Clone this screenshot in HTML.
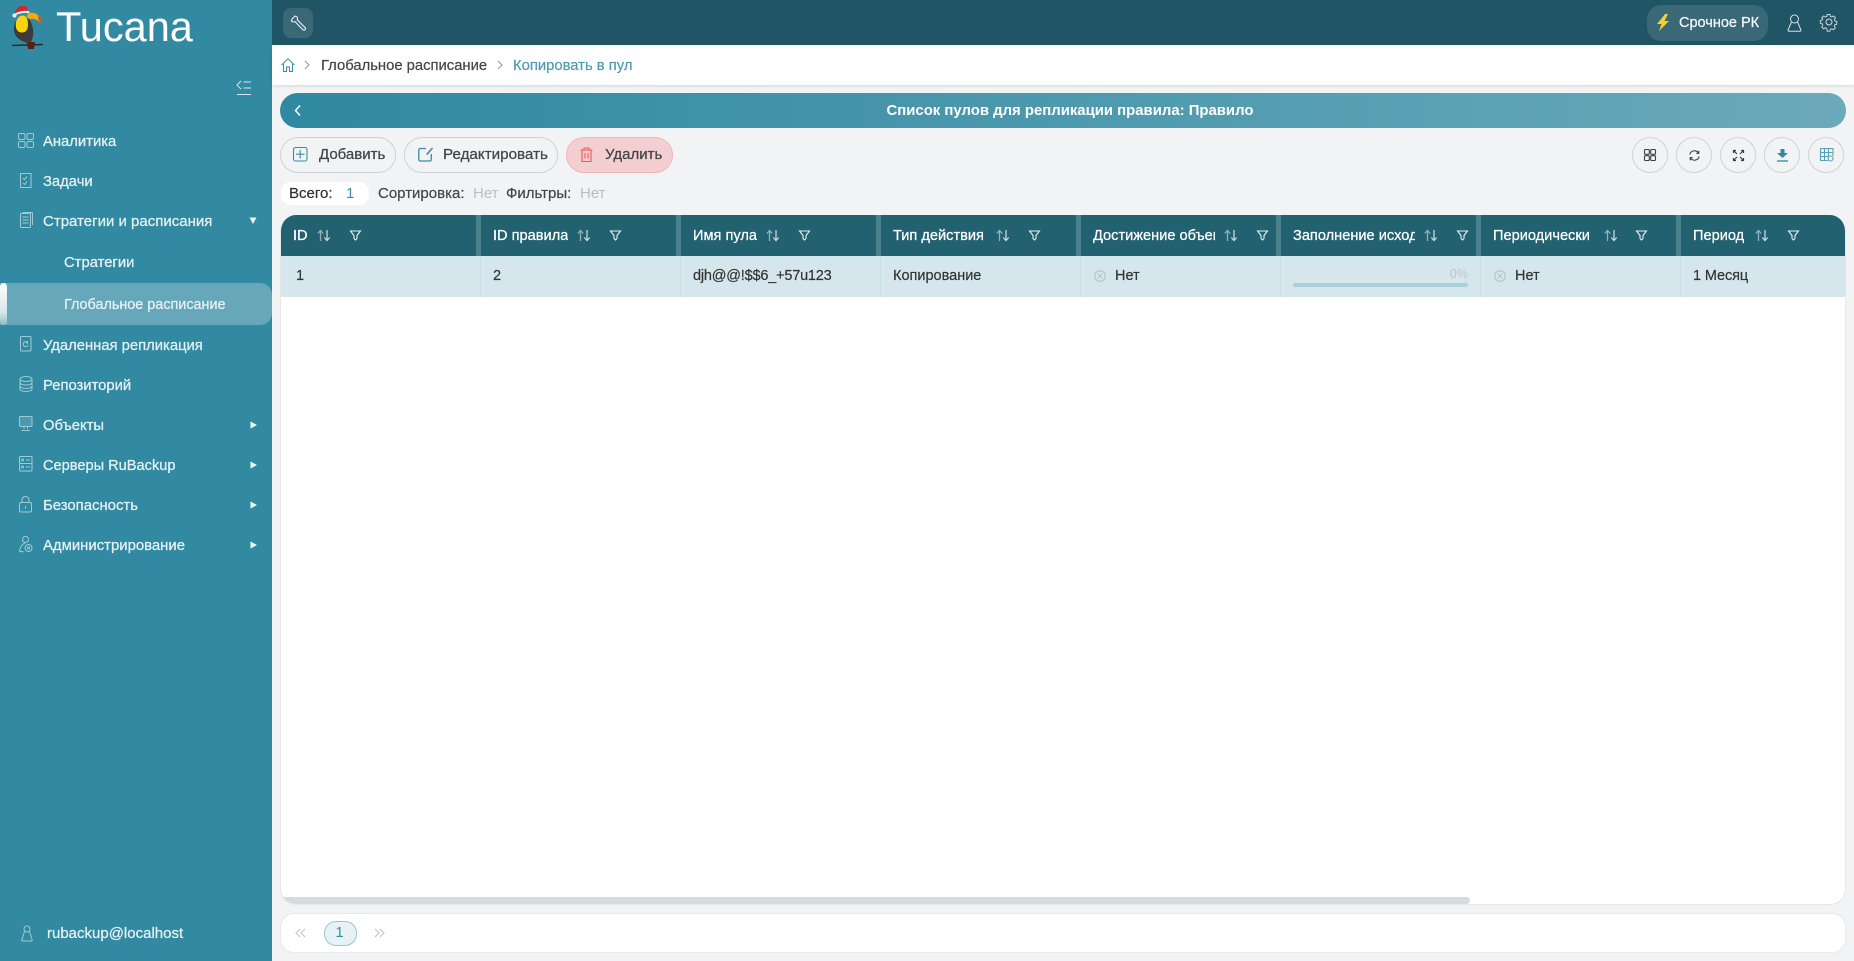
<!DOCTYPE html>
<html lang="ru"><head><meta charset="utf-8"><title>Tucana</title>
<style>
html,body{margin:0;padding:0;width:1854px;height:961px;overflow:hidden;background:#f2f3f5;font-family:"Liberation Sans",sans-serif}
.a{position:absolute}
.t{position:absolute;white-space:nowrap;line-height:20px;height:20px;font-size:15px;margin-top:1px}
svg{position:absolute;overflow:visible;fill:none}
.m{color:#e6f1f4;font-size:14.8px;left:43px;-webkit-text-stroke:.25px #e6f1f4}
.h{color:#fff;font-size:14.6px;top:225px;overflow:hidden;-webkit-text-stroke:.25px #fff}
.c{color:#333;font-size:14.5px;top:265px;-webkit-text-stroke:.2px #333}
.b{color:#444;top:144px;-webkit-text-stroke:.25px #444}
.rb{position:absolute;top:137px;width:34px;height:34px;border:1px solid #d0d2d4;border-radius:50%}
.sep{position:absolute;top:215px;height:41px;width:5px;background:#4b808d}
.div{position:absolute;top:256px;height:41px;width:1px;background:#c9dfe5}
.si{stroke:#e6f1f4;stroke-width:1;opacity:.62;margin-top:-1px}
</style></head><body>
<!-- sidebar -->
<div class="a" style="left:0;top:0;width:272px;height:961px;background:#318aa2"></div>
<!-- toucan -->
<svg style="left:0;top:0" width="50" height="52" viewBox="0 0 50 52">
<path d="M12 45.500l31-1" stroke="#2a2a2a" stroke-width="1.500"/>
<path d="M14 26c-1 7 2 12 8 15l5 2 4-1c3-6 3-13 0-20-3-6-15-8-17 4z" fill="#3b3b3d"/>
<path d="M27 42l1 7h6l1-7z" fill="#5c1f12"/>
<path d="M16 22c-1 6 1 10 5 10.500 5 .5 7-3 7-8 0-6-2-9-5-9-4 0-6 3-7 6.500z" fill="#fbd40e"/>
<path d="M25 15c4-3 9-3 13 0 3 2 4 5 3.500 9-3-4-7-6-12-5z" fill="#f6a915"/>
<path d="M38 15c3 2 4 5 3.500 9l-3-4z" fill="#d8541e"/>
<path d="M15 12c2-5 6-7 10-6 2 .5 3 3 4 6-5 0-10 1-14 3z" fill="#d9232e"/>
<path d="M14 14c5-3 10-3.500 15-3l.5 2c-5-.5-10 0-15 2.500z" fill="#f2f2f2"/>
<circle cx="14.500" cy="15.500" r="2" fill="#f2f2f2"/>
<circle cx="26" cy="15" r="1.500" fill="#2a9c7a"/>
</svg>
<div class="t" style="left:56px;top:2px;height:48px;line-height:48px;font-size:41.500px;color:#fff">Tucana</div>
<svg style="left:236px;top:80px" width="16" height="16" stroke="#d5e8ed" stroke-width="1"><path d="M5 1L1 5l4 4M7.500 2H15M7.500 8H15M1 14.500h14"/></svg>

<svg class="si" style="left:18px;top:134px" width="16" height="15"><rect x=".5" y=".5" width="6.500" height="6" rx="1.500"/><rect x="9" y=".5" width="6.500" height="6" rx="1.500"/><rect x=".5" y="8.500" width="6.500" height="6" rx="1.500"/><rect x="9" y="8.500" width="6.500" height="6" rx="1.500"/></svg>
<div class="t m" style="top:131px">Аналитика</div>
<svg class="si" style="left:20px;top:174px" width="12" height="15"><rect x=".5" y=".5" width="10.500" height="14"/><path d="M3 5l1.500 1.500L7 3.500M3 10l1.500 1.500L7 8.500"/></svg>
<div class="t m" style="top:171px">Задачи</div>
<svg class="si" style="left:20px;top:213px" width="13" height="16"><rect x=".5" y="1.500" width="10" height="14" rx="1"/><path d="M3 1V.5h8.500a1 1 0 0 1 1 1V13M2.500 5h6M2.500 8h6M2.500 11h6"/></svg>
<div class="t m" style="top:211px;font-size:15px">Стратегии и расписания</div>
<svg style="left:249px;top:217px" width="9" height="8"><path d="M.5.500h7L4 7z" fill="#eef6f8"/></svg>
<div class="t m" style="top:252px;left:64px">Стратегии</div>
<div class="a" style="left:0;top:283px;width:272px;height:42px;background:#66a7b9;border-radius:0 12px 12px 0"></div>
<div class="a" style="left:0;top:283px;width:7px;height:42px;background:linear-gradient(#fff,#d7e8ec 70%,#8dbdcb);border-radius:4px"></div>
<div class="t m" style="top:294px;left:64px;font-size:14.400px">Глобальное расписание</div>
<svg class="si" style="left:20px;top:337px" width="12" height="16"><rect x=".5" y=".5" width="10.500" height="14.500" rx="1"/><path d="M7.500 6.500A2.500 2.500 0 1 0 8 9M7.500 5v2H6"/></svg>
<div class="t m" style="top:335px">Удаленная репликация</div>
<svg class="si" style="left:19px;top:377px" width="14" height="16"><ellipse cx="7" cy="3" rx="6" ry="2.500"/><path d="M1 3v10c0 1.500 2.500 2.500 6 2.500s6-1 6-2.500V3M1 6.500c0 1.500 2.500 2.500 6 2.500s6-1 6-2.500M1 10c0 1.500 2.500 2.500 6 2.500s6-1 6-2.500"/></svg>
<div class="t m" style="top:375px">Репозиторий</div>
<svg class="si" style="left:19px;top:417px" width="14" height="16"><rect x=".5" y=".5" width="12.500" height="10" rx="1" fill="#e6f1f4" fill-opacity=".25"/><path d="M5 11v2M8.500 11v2M2.500 14.500h8.500"/></svg>
<div class="t m" style="top:415px">Объекты</div>
<svg style="left:250px;top:421px" width="8" height="9"><path d="M.5.500v7L7 4z" fill="#eef6f8"/></svg>
<svg class="si" style="left:19px;top:457px" width="14" height="16"><rect x=".5" y=".5" width="12.500" height="14.500" rx="1"/><path d="M.5 7.500h12.500M7 4h4M7 11h4"/><circle cx="3.500" cy="4" r="1"/><circle cx="3.500" cy="11" r="1"/></svg>
<div class="t m" style="top:455px;font-size:14.600px">Серверы RuBackup</div>
<svg style="left:250px;top:461px" width="8" height="9"><path d="M.5.500v7L7 4z" fill="#eef6f8"/></svg>
<svg class="si" style="left:19px;top:497px" width="13" height="17"><rect x=".5" y="6.500" width="12" height="9.500" rx="1.500"/><path d="M3 6.500V4a3.500 3.500 0 0 1 7 0v2.500M6.500 10v3"/></svg>
<div class="t m" style="top:495px;font-size:14.900px">Безопасность</div>
<svg style="left:250px;top:501px" width="8" height="9"><path d="M.5.500v7L7 4z" fill="#eef6f8"/></svg>
<svg class="si" style="left:19px;top:537px" width="14" height="17"><circle cx="6.500" cy="3.500" r="3"/><path d="M6 7C3 8 1 12 .5 15c2 1 3 1 4 .500"/><circle cx="9.500" cy="12" r="3.500"/><circle cx="9.500" cy="12" r="1"/></svg>
<div class="t m" style="top:535px;font-size:14.900px">Администрирование</div>
<svg style="left:250px;top:541px" width="8" height="9"><path d="M.5.500v7L7 4z" fill="#eef6f8"/></svg>
<svg class="si" style="left:21px;top:926px" width="12" height="17"><circle cx="6" cy="4" r="3"/><path d="M3.500 6.500L.8 15c0 .6.300 1 1 1h8.400c.7 0 1-.4 1-1L8.500 6.500"/></svg>
<div class="t m" style="top:923px;left:47px;font-size:15px">rubackup@localhost</div>

<!-- top bar -->
<div class="a" style="left:272px;top:0;width:1582px;height:45px;background:#1f5564"></div>
<div class="a" style="left:283px;top:8px;width:30px;height:30px;border-radius:8px;background:#3b6876"></div>
<svg style="left:291px;top:15px" width="16" height="16" viewBox="0 0 14 14" stroke="#e3edf0" stroke-width="1"><path d="M1 3.500L3.500 1l1 .2c1 .3 1.500 1.500 1 3l7 7c.5 1 0 1.800-.8 2-.5.1-1 0-1.400-.4l-6.800-7c-1.500.5-2.800 0-3.200-1z"/></svg>
<div class="a" style="left:1647px;top:5px;width:121px;height:36px;border-radius:14px;background:#3b6876"></div>
<svg style="left:1657px;top:14px" width="12" height="17"><path d="M8 0L0 10h4.500L2 17l10-10H7.500L11 0z" fill="#f3cf30"/></svg>
<div class="t" style="left:1679px;top:12px;color:#f3f8f9;font-size:14.500px;-webkit-text-stroke:.25px #f3f8f9">Срочное РК</div>
<svg style="left:1787px;top:14px" width="15" height="18" stroke="#d6e2e5" stroke-width="1"><circle cx="7.500" cy="5" r="4"/><path d="M4.500 8L1 16c0 .8.400 1.300 1.200 1.300h10.600c.8 0 1.200-.5 1.200-1.300L10.500 8"/></svg>
<svg style="left:1820px;top:13px" width="18" height="18" viewBox="0 0 18 18" stroke="#d6e2e5" stroke-width="1"><path d="M7.500 1h3l.5 2.200 1.600.7 2-1.200 2 2.100-1.200 1.900.7 1.600 2 .6v3l-2 .5-.7 1.600 1.100 2-2.100 2-1.900-1.100-1.600.7-.5 2.100h-3L7 16.600l-1.600-.7-1.900 1.100-2.100-2 1.100-2-.7-1.600-2-.5v-3l2-.6.7-1.600L1.400 4.800l2.100-2.100 1.900 1.200L7 3.200z" transform="translate(.5 .5) scale(.9)"/><circle cx="9" cy="9" r="3"/></svg>

<!-- breadcrumb -->
<div class="a" style="left:272px;top:45px;width:1582px;height:40px;background:#fff;box-shadow:0 1px 3px rgba(0,0,0,.12)"></div>
<svg style="left:281px;top:58px" width="14" height="14" stroke="#3a8ca5" stroke-width="1"><path d="M.5 7L7 .8 13.500 7M2.500 6v7.500h3V9h3v4.500h3V6"/></svg>
<svg style="left:304px;top:60px" width="7" height="10" stroke="#999" stroke-width="1.100"><path d="M1 1l4 4-4 4"/></svg>
<div class="t" style="left:321px;top:55px;font-size:14.800px;color:#444;-webkit-text-stroke:.2px #444">Глобальное расписание</div>
<svg style="left:497px;top:60px" width="7" height="10" stroke="#999" stroke-width="1.100"><path d="M1 1l4 4-4 4"/></svg>
<div class="t" style="left:513px;top:55px;font-size:14.800px;color:#4c9bb0;-webkit-text-stroke:.2px #4c9bb0">Копировать в пул</div>

<!-- title -->
<div class="a" style="left:280px;top:93px;width:1566px;height:35px;border-radius:18px;background:linear-gradient(90deg,#2f89a0,#6ba9bb)"></div>
<svg style="left:294px;top:104px" width="7" height="13" stroke="#fff" stroke-width="1.500"><path d="M6 1.500L1.500 6.500 6 11.500"/></svg>
<div class="t" style="left:280px;width:1580px;top:100px;text-align:center;color:#fff;font-weight:700;font-size:14.900px">Список пулов для репликации правила: Правило</div>

<!-- buttons -->
<div class="a" style="left:280px;top:137px;width:114px;height:34px;border:1px solid #cfd2d5;border-radius:18px"></div>
<svg style="left:293px;top:147px" width="15" height="15" stroke="#3a8ca5" stroke-width="1.100"><rect x=".5" y=".5" width="13.500" height="13.500" rx="2"/><path d="M7.200 3v8.500M3 7.200h8.500"/></svg>
<div class="t b" style="left:319px">Добавить</div>
<div class="a" style="left:404px;top:137px;width:152px;height:34px;border:1px solid #cfd2d5;border-radius:18px"></div>
<svg style="left:418px;top:147px" width="15" height="15"><path d="M8 1.500H2A1.500 1.500 0 0 0 .8 3v9.500A1.500 1.500 0 0 0 2.300 14h9.500a1.500 1.500 0 0 0 1.500-1.500V7" stroke="#3a8ca5" stroke-width="1.300"/><path d="M8 7l6-6.500 1 1L9.500 8z" fill="#3a8ca5"/></svg>
<div class="t b" style="left:443px;font-size:15.200px">Редактировать</div>
<div class="a" style="left:566px;top:137px;width:105px;height:34px;background:#f4cfd1;border:1px solid #f3b5b8;border-radius:18px"></div>
<svg style="left:580px;top:147px" width="13" height="15" stroke="#f0555c" stroke-width="1.100"><path d="M.5 3h12M4 3V1h5v2M2 3v11.500h9V3M5 6v5.500M8 6v5.500"/></svg>
<div class="t b" style="left:605px">Удалить</div>

<div class="rb" style="left:1632px"></div>
<svg style="left:1644px;top:149px" width="12" height="12" stroke="#3e3e3e" stroke-width="1.100"><rect x=".5" y=".5" width="4.800" height="4.800" rx="1"/><rect x="6.700" y=".5" width="4.800" height="4.800" rx="1"/><rect x=".5" y="6.700" width="4.800" height="4.800" rx="1"/><rect x="6.700" y="6.700" width="4.800" height="4.800" rx="1"/></svg>
<div class="rb" style="left:1676px"></div>
<svg style="left:1689px;top:150px" width="11" height="11" stroke="#3e3e3e" stroke-width="1.100"><path d="M.8 4.500A4.800 4.800 0 0 1 9.500 3M10.200 6.500A4.800 4.800 0 0 1 1.500 8M9.800.8V3.300H7.300M1.200 10.200V7.700h2.500"/></svg>
<div class="rb" style="left:1720px"></div>
<svg style="left:1733px;top:150px" width="11" height="11" stroke="#3e3e3e" stroke-width="1.200"><path d="M1 1l3 3M10 1L7 4M1 10l3-3M10 10L7 7M.5 3V.5H3M8 .5h2.500V3M.5 8v2.500H3M8 10.500h2.500V8"/></svg>
<div class="rb" style="left:1764px"></div>
<svg style="left:1777px;top:149px" width="11" height="13"><path d="M3.500 0h4v4H11L5.500 9 0 4h3.500z" fill="#2e8aa2"/><path d="M0 12h11" stroke="#2e8aa2" stroke-width="1.300"/></svg>
<div class="rb" style="left:1808px"></div>
<svg style="left:1820px;top:148px" width="14" height="14" stroke="#5aa0b3" stroke-width="1.100"><path d="M8 12.500H.5V.5h12.500V8M.5 4.500h12.500M.5 8.500h8M4.500.5v12M8.500.5v8"/><circle cx="10.500" cy="10.500" r="2.500"/></svg>

<!-- stats -->
<div class="a" style="left:281px;top:182px;width:88px;height:23px;background:#fff;border-radius:10px"></div>
<div class="t" style="left:289px;top:183px;color:#333;-webkit-text-stroke:.2px #333">Всего:</div>
<div class="t" style="left:346px;top:183px;color:#3a8ca5">1</div>
<div class="t" style="left:378px;top:183px;color:#444;-webkit-text-stroke:.2px #444">Сортировка:</div>
<div class="t" style="left:473px;top:183px;color:#bdbdbd">Нет</div>
<div class="t" style="left:506px;top:183px;color:#444;-webkit-text-stroke:.2px #444">Фильтры:</div>
<div class="t" style="left:580px;top:183px;color:#bdbdbd">Нет</div>

<!-- table -->
<div class="a" style="left:280px;top:215px;width:1564px;height:689px;background:#fff;border:1px solid #e6e7e9;border-top:0;border-radius:16px;overflow:hidden">
  <div class="a" style="left:-1px;top:0;width:1566px;height:41px;background:#226170"></div>
  <div class="a" style="left:-1px;top:41px;width:1566px;height:41px;background:#d5e7ec"></div>
  <div class="a" style="left:-1px;top:682px;width:1190px;height:7px;background:#d8d9dd;border-radius:0 4px 4px 4px"></div>
</div>
<div class="sep" style="left:476px"></div><div class="sep" style="left:676px"></div><div class="sep" style="left:876px"></div><div class="sep" style="left:1076px"></div><div class="sep" style="left:1276px"></div><div class="sep" style="left:1476px"></div><div class="sep" style="left:1676px"></div>
<div class="div" style="left:480px"></div><div class="div" style="left:680px"></div><div class="div" style="left:880px"></div><div class="div" style="left:1080px"></div><div class="div" style="left:1280px"></div><div class="div" style="left:1480px"></div><div class="div" style="left:1680px"></div>

<div class="t h" style="left:293px">ID</div>
<div class="t h" style="left:493px">ID правила</div>
<div class="t h" style="left:693px">Имя пула</div>
<div class="t h" style="left:893px">Тип действия</div>
<div class="t h" style="left:1093px;width:122px">Достижение объектов</div>
<div class="t h" style="left:1293px;width:122px">Заполнение исходного</div>
<div class="t h" style="left:1493px;width:102px">Периодически</div>
<div class="t h" style="left:1693px">Период</div>

<svg width="0" height="0"><defs>
<g id="s"><path d="M3.500 12V2M.8 4.500L3.500 1.500l2.700 3" stroke="#8fb2bb" stroke-width="1.300"/><path d="M10 1v10M7.300 8.500L10 11.500l2.700-3" stroke="#c5d8dc" stroke-width="1.300"/></g>
<path id="f" d="M.5 1h10L7 5.500V8.500L5.500 10 4 8.500V5.500z" stroke="#e8f1f3" stroke-width="1.100"/>
<g id="x"><circle cx="6" cy="6" r="5.300" stroke="#b4bfc2" stroke-width="1"/><path d="M3.800 3.800l4.400 4.400M8.200 3.800L3.800 8.200" stroke="#b4bfc2" stroke-width="1"/></g>
</defs></svg>
<svg style="left:317px;top:229px" width="14" height="13"><use href="#s"/></svg><svg style="left:350px;top:230px" width="11" height="11"><use href="#f"/></svg>
<svg style="left:577px;top:229px" width="14" height="13"><use href="#s"/></svg><svg style="left:610px;top:230px" width="11" height="11"><use href="#f"/></svg>
<svg style="left:766px;top:229px" width="14" height="13"><use href="#s"/></svg><svg style="left:799px;top:230px" width="11" height="11"><use href="#f"/></svg>
<svg style="left:996px;top:229px" width="14" height="13"><use href="#s"/></svg><svg style="left:1029px;top:230px" width="11" height="11"><use href="#f"/></svg>
<svg style="left:1224px;top:229px" width="14" height="13"><use href="#s"/></svg><svg style="left:1257px;top:230px" width="11" height="11"><use href="#f"/></svg>
<svg style="left:1424px;top:229px" width="14" height="13"><use href="#s"/></svg><svg style="left:1457px;top:230px" width="11" height="11"><use href="#f"/></svg>
<svg style="left:1604px;top:229px" width="14" height="13"><use href="#s"/></svg><svg style="left:1636px;top:230px" width="11" height="11"><use href="#f"/></svg>
<svg style="left:1755px;top:229px" width="14" height="13"><use href="#s"/></svg><svg style="left:1788px;top:230px" width="11" height="11"><use href="#f"/></svg>

<div class="t c" style="left:296px">1</div>
<div class="t c" style="left:493px">2</div>
<div class="t c" style="left:693px;letter-spacing:-.2px">djh@@!$$6_+57u123</div>
<div class="t c" style="left:893px">Копирование</div>
<svg style="left:1094px;top:270px" width="12" height="12"><use href="#x"/></svg>
<div class="t c" style="left:1115px">Нет</div>
<div class="a" style="left:1293px;top:283px;width:175px;height:4px;border-radius:2px;background:#a9d0da"></div>
<div class="t" style="left:1440px;width:28px;top:263px;text-align:right;color:#bdc5c8;font-size:12.500px">0%</div>
<svg style="left:1494px;top:270px" width="12" height="12"><use href="#x"/></svg>
<div class="t c" style="left:1515px">Нет</div>
<div class="t c" style="left:1693px;letter-spacing:-.1px">1 Месяц</div>

<!-- pager -->
<div class="a" style="left:280px;top:913px;width:1564px;height:38px;background:#fff;border:1px solid #e8e9eb;border-radius:14px"></div>
<svg style="left:295px;top:928px" width="11" height="10" stroke="#c4c7ca" stroke-width="1.200"><path d="M5 1L1 5l4 4M10 1L6 5l4 4"/></svg>
<div class="a" style="left:324px;top:921px;width:31px;height:23px;background:#e8f2f5;border:1px solid #9ac6d2;border-radius:12px"></div>
<div class="t" style="left:323px;width:33px;top:922px;text-align:center;color:#3a8ca5">1</div>
<svg style="left:374px;top:928px" width="11" height="10" stroke="#c4c7ca" stroke-width="1.200"><path d="M1 1l4 4-4 4M6 1l4 4-4 4"/></svg>
</body></html>
